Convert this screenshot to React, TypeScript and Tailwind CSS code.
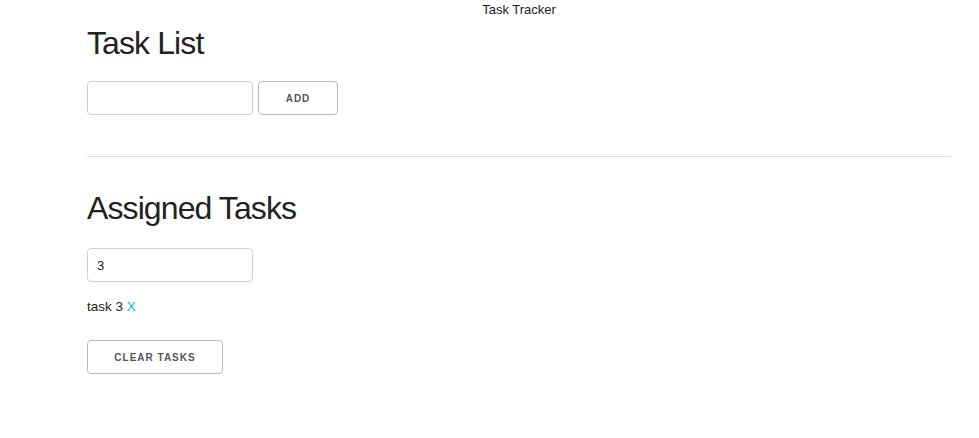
import React, { useState } from 'react';

export default function App() {
  const [taskName, setTaskName] = useState('');
  const [assignee, setAssignee] = useState('3');
  const [tasks, setTasks] = useState<string[]>(['task 3']);

  const addTask = () => {
    const name = taskName.trim();
    if (!name) return;
    setTasks([...tasks, name]);
    setTaskName('');
  };

  return (
    <div className="min-h-screen bg-white text-[#222] font-[family-name:'Liberation_Sans',Arial,sans-serif]">
      <div className="ml-[87px] w-[864px] flex flex-col">
        <div className="pt-[2px] text-center text-[13px] leading-[15px]">Task Tracker</div>

        <h1 className="mt-[8px] text-[32px] leading-[36px] tracking-[-0.9px] font-normal">Task List</h1>
        <div className="mt-[20px] flex items-center gap-[5px]">
          <input
            type="text"
            value={taskName}
            onChange={e => setTaskName(e.target.value)}
            className="h-[34px] w-[166px] rounded-[4px] border border-[#d1d1d1] px-[9px] text-[13px] outline-none"
          />
          <button
            onClick={addTask}
            className="h-[34px] w-[80px] rounded-[4px] border border-[#bbb] text-[10px] font-bold uppercase tracking-[1px] text-[#555]"
          >
            Add
          </button>
        </div>

        <hr className="mt-[41px] border-0 border-t border-[#e1e1e1]" />

        <h2 className="mt-[33px] text-[32px] leading-[36px] tracking-[-0.9px] font-normal">Assigned Tasks</h2>
        <input
          type="text"
          value={assignee}
          onChange={e => setAssignee(e.target.value)}
          className="mt-[22px] h-[34px] w-[166px] rounded-[4px] border border-[#d1d1d1] px-[9px] text-[13px] outline-none"
        />
        <ul className="mt-[15px] flex flex-col">
          {tasks.map((t, i) => (
            <li key={i} className="text-[13.5px] leading-[20px]">
              {t}{' '}
              <a
                href="#"
                onClick={e => {
                  e.preventDefault();
                  setTasks(tasks.filter((_, j) => j !== i));
                }}
                className="text-[#1eaedb]"
              >
                X
              </a>
            </li>
          ))}
        </ul>
        <button
          onClick={() => setTasks([])}
          className="mt-[23px] h-[34px] w-[136px] rounded-[4px] border border-[#bbb] text-[10px] font-bold uppercase tracking-[1px] text-[#555]"
        >
          Clear Tasks
        </button>
      </div>
    </div>
  );
}
